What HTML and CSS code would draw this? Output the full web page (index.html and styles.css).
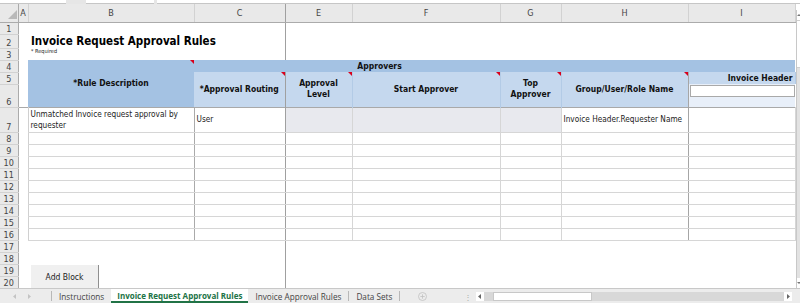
FILE: index.html
```html
<!DOCTYPE html>
<html lang="en">
  <head>
    <meta charset="UTF-8" />
    <title>Invoice Request Approval Rules</title>
    <link rel="stylesheet" href="styles.css">
  </head>
  <body>
    <div class="window">
      <div class="formula-strip">
        <div class="name-box"></div>
        <div class="fx-box"></div>
        <div class="formula-box"></div>
      </div>

      <div class="grid-area">
        <table class="sheet">
          <colgroup>
            <col class="c-rn" /><col class="c-a" /><col class="c-b" /><col class="c-c" />
            <col class="c-e" /><col class="c-f" /><col class="c-g" /><col class="c-h" /><col class="c-i" />
          </colgroup>
          <thead>
            <tr class="col-heads">
              <th class="corner">
                <svg width="9" height="9" viewBox="0 0 9 9"><path d="M9 0V9H0Z" fill="#b9b9b9" /></svg>
              </th>
              <th>A</th><th>B</th><th class="fz">C</th><th>E</th><th>F</th><th>G</th><th>H</th><th>I</th>
            </tr>
          </thead>
          <tbody>
            <tr class="h12"><th>1</th><td></td><td></td><td class="fz"></td><td></td><td></td><td></td><td></td><td></td></tr>
            <tr class="h14">
              <th>2</th><td></td>
              <td colspan="2" class="fz title-cell">Invoice Request Approval Rules</td>
              <td></td><td></td><td></td><td></td><td></td>
            </tr>
            <tr class="h12">
              <th>3</th><td></td>
              <td class="required">* Required</td><td class="fz"></td>
              <td></td><td></td><td></td><td></td><td></td>
            </tr>
            <tr class="h12">
              <th>4</th><td></td>
              <td rowspan="3" class="hd hd-main note">*Rule Description</td>
              <td colspan="4" class="hd band">Approvers</td>
              <td class="hd band"></td><td class="hd band"></td>
            </tr>
            <tr class="h12">
              <th>5</th><td></td>
              <td rowspan="2" class="hd sub note bl">*Approval Routing</td>
              <td rowspan="2" class="hd sub note">Approval<br>Level</td>
              <td rowspan="2" class="hd sub note">Start Approver</td>
              <td rowspan="2" class="hd sub note">Top<br>Approver</td>
              <td rowspan="2" class="hd sub note br">Group/User/Role Name</td>
              <td class="hd sub right">Invoice Header</td>
            </tr>
            <tr class="h23">
              <th>6</th><td></td>
              <td class="filter-cell"><div class="filter-box"></div></td>
            </tr>
            <tr class="h25 data">
              <th>7</th><td></td>
              <td class="cell">Unmatched Invoice request approval by requester</td>
              <td class="cell fz">User</td>
              <td class="cell grey"></td><td class="cell grey"></td><td class="cell grey"></td>
              <td class="cell br">Invoice Header.Requester Name</td>
              <td class="cell"></td>
            </tr>
            <tr class="h12 data"><th>8</th><td></td><td class="cell"></td><td class="cell fz"></td><td class="cell"></td><td class="cell"></td><td class="cell"></td><td class="cell br"></td><td class="cell"></td></tr>
            <tr class="h12 data"><th>9</th><td></td><td class="cell"></td><td class="cell fz"></td><td class="cell"></td><td class="cell"></td><td class="cell"></td><td class="cell br"></td><td class="cell"></td></tr>
            <tr class="h12 data"><th>10</th><td></td><td class="cell"></td><td class="cell fz"></td><td class="cell"></td><td class="cell"></td><td class="cell"></td><td class="cell br"></td><td class="cell"></td></tr>
            <tr class="h12 data"><th>11</th><td></td><td class="cell"></td><td class="cell fz"></td><td class="cell"></td><td class="cell"></td><td class="cell"></td><td class="cell br"></td><td class="cell"></td></tr>
            <tr class="h12 data"><th>12</th><td></td><td class="cell"></td><td class="cell fz"></td><td class="cell"></td><td class="cell"></td><td class="cell"></td><td class="cell br"></td><td class="cell"></td></tr>
            <tr class="h12 data"><th>13</th><td></td><td class="cell"></td><td class="cell fz"></td><td class="cell"></td><td class="cell"></td><td class="cell"></td><td class="cell br"></td><td class="cell"></td></tr>
            <tr class="h12 data"><th>14</th><td></td><td class="cell"></td><td class="cell fz"></td><td class="cell"></td><td class="cell"></td><td class="cell"></td><td class="cell br"></td><td class="cell"></td></tr>
            <tr class="h12 data"><th>15</th><td></td><td class="cell"></td><td class="cell fz"></td><td class="cell"></td><td class="cell"></td><td class="cell"></td><td class="cell br"></td><td class="cell"></td></tr>
            <tr class="h12 data"><th>16</th><td></td><td class="cell"></td><td class="cell fz"></td><td class="cell"></td><td class="cell"></td><td class="cell"></td><td class="cell br"></td><td class="cell"></td></tr>
            <tr class="h12"><th>17</th><td></td><td></td><td class="fz"></td><td></td><td></td><td></td><td></td><td></td></tr>
            <tr class="h12"><th>18</th><td></td><td></td><td class="fz"></td><td></td><td></td><td></td><td></td><td></td></tr>
            <tr class="h12"><th>19</th><td></td><td></td><td class="fz"></td><td></td><td></td><td></td><td></td><td></td></tr>
            <tr class="h12"><th>20</th><td></td><td></td><td class="fz"></td><td></td><td></td><td></td><td></td><td></td></tr>
          </tbody>
        </table>

        <div class="vscroll">
          <div class="arrow-box">
            <svg width="4" height="4" viewBox="0 0 4 4"><path d="M0 3L2 1L4 3Z" fill="#777" /></svg>
          </div>
          <div class="vthumb"></div>
          <div class="vtrack"></div>
          <div class="arrow-box">
            <svg width="4" height="4" viewBox="0 0 4 4"><path d="M0 1L2 3L4 1Z" fill="#777" /></svg>
          </div>
        </div>

        <button class="add-block">Add Block</button>
      </div>

      <div class="tabbar">
        <div class="tab-nav">
          <svg width="4" height="5" viewBox="0 0 4 5"><path d="M3 0V5L0 2.5Z" fill="#c4c4c4" /></svg>
          <svg width="4" height="5" viewBox="0 0 4 5"><path d="M1 0V5L4 2.5Z" fill="#c4c4c4" /></svg>
        </div>
        <div class="tab">Instructions</div>
        <div class="tab active">Invoice Request Approval Rules</div>
        <div class="tab">Invoice Approval Rules</div>
        <div class="tab sep">Data Sets</div>
        <div class="add-sheet">
          <svg width="9" height="9" viewBox="0 0 9 9">
            <circle cx="4.5" cy="4.5" r="4" fill="none" stroke="#c2c2c2" stroke-width="0.8" />
            <path d="M4.5 2.3V6.7M2.3 4.5H6.7" stroke="#c2c2c2" stroke-width="0.8" />
          </svg>
        </div>
        <div class="dots">⋮</div>
        <div class="hscroll">
          <div class="h-arrow">
            <svg width="4" height="5" viewBox="0 0 4 5"><path d="M3 0V5L0 2.5Z" fill="#666" /></svg>
          </div>
          <div class="h-gap"></div>
          <div class="h-thumb"></div>
          <div class="h-track"></div>
          <div class="h-arrow">
            <svg width="4" height="5" viewBox="0 0 4 5"><path d="M1 0V5L4 2.5Z" fill="#666" /></svg>
          </div>
        </div>
      </div>
    </div>
  </body>
</html>
```

FILE: styles.css
```css
body {
  margin: 0;
  background: #fff;
  font-family: "DejaVu Sans", sans-serif;
  font-stretch: condensed;
  color: #222;
}

.window {
  width: 800px;
  height: 303px;
  overflow: hidden;
  display: flex;
  flex-direction: column;
}

/* remains of the formula bar */
.formula-strip {
  height: 4px;
  display: flex;
  background: #e6e6e6;
}

.formula-strip div {
  background: #fff;
  border-bottom: 1px solid #c6c6c6;
  box-sizing: border-box;
}

.name-box {
  width: 66px;
  margin-right: 20px;
}

.fx-box {
  width: 68px;
  margin-right: 3px;
}

.formula-box {
  flex: 1;
}

.grid-area {
  position: relative;
  height: 284px;
  display: flex;
  overflow: hidden;
}

.sheet {
  width: 795px;
  table-layout: fixed;
  border-collapse: collapse;
  flex: none;
}

.c-rn { width: 18px; }
.c-a { width: 10px; }
.c-b { width: 166px; }
.c-c { width: 91px; }
.c-e { width: 67px; }
.c-f { width: 148px; }
.c-g { width: 61px; }
.c-h { width: 127px; }
.c-i { width: 107px; }

.sheet td,
.sheet th {
  padding: 0;
  overflow: hidden;
  white-space: nowrap;
}

.col-heads {
  height: 18px;
}

.col-heads th {
  background: #e9e9e9;
  border-right: 1px solid #d2d2d2;
  border-bottom: 1px solid #ababab;
  font-weight: normal;
  font-size: 9px;
  color: #444;
  text-align: center;
  vertical-align: middle;
}

.col-heads .corner {
  text-align: right;
  vertical-align: bottom;
  line-height: 0;
  padding: 0 1px 3px 0;
  border-right-color: #ababab;
}

tbody th {
  background: #e9e9e9;
  border-right: 1px solid #ababab;
  border-bottom: 1px solid #d2d2d2;
  font-weight: normal;
  font-size: 9px;
  line-height: 10px;
  color: #444;
  text-align: center;
  vertical-align: bottom;
}

.h12 { height: 12px; }
.h14 { height: 14px; }
.h23 { height: 23px; }
.h25 { height: 25px; }

.sheet .fz {
  border-right: 1px solid #a0a0a0;
}

.title-cell {
  font-size: 11.5px;
  font-weight: bold;
  color: #000;
  padding-left: 3px !important;
  vertical-align: bottom;
}

.required {
  font-size: 5.5px;
  padding-left: 3px !important;
  vertical-align: top;
  color: #222;
}

/* header block */
.hd {
  position: relative;
  font-weight: bold;
  font-size: 8.5px;
  color: #111;
  text-align: center;
  vertical-align: middle;
  line-height: 11px;
}

.hd-main {
  background: #a4c2e3;
}

.band {
  background: #a4c2e3;
  padding-left: 4px !important;
}

.sub {
  background: #c5d8ee;
  border-right: 1px solid #b3cbe6;
}

.sub.bl {
  border-right-color: #a0a0a0;
}

.sub.br {
  border-right-color: #a6a6a6;
}

.sub.right {
  text-align: right;
  padding-right: 2px;
}

.note::after {
  content: "";
  position: absolute;
  top: 0;
  right: 0;
  border-left: 4px solid transparent;
  border-top: 4px solid #d8001c;
}

.filter-cell {
  background: #e8eff9;
  vertical-align: top;
}

.filter-box {
  height: 10px;
  margin: 1px 0 0 1px;
  background: #fff;
  border: 1px solid #a9a9a9;
}

/* body cells */
.data .cell {
  border-right: 1px solid #d6d6d6;
  border-bottom: 1px solid #d6d6d6;
  font-size: 8.2px;
  color: #222;
  padding: 0 2px;
  vertical-align: middle;
  white-space: normal;
  line-height: 11px;
}

.data td:nth-child(3) {
  border-left: 1px solid #d0d0d0;
  border-right-color: #aaaaaa;
}

.data .cell.fz {
  border-right-color: #a0a0a0;
}

.data .cell.br {
  border-right-color: #a6a6a6;
}

.data .grey {
  background: #e8e9ee;
}

.h25.data {
  border-top: 1px solid #a9a9a9;
}

.vscroll {
  width: 5px;
  margin-top: 6px;
  display: flex;
  flex-direction: column;
  background: #e2e2e2;
  border-left: 1px solid #c8c8c8;
}

.arrow-box {
  height: 10px;
  background: #fff;
  display: flex;
  align-items: center;
  justify-content: center;
}

.vthumb {
  height: 46px;
  background: #fff;
  border-top: 1px solid #d0d0d0;
  border-bottom: 1px solid #d0d0d0;
}

.vtrack {
  flex: 1;
}

.add-block {
  position: absolute;
  left: 31px;
  top: 261px;
  width: 68px;
  height: 23px;
  border: none;
  border-right: 1px solid #8f8f8f;
  background: #f0f0f0;
  font-family: "DejaVu Sans", sans-serif;
  font-stretch: condensed;
  font-size: 8.5px;
  color: #222;
  padding: 0;
}

/* sheet tabs */
.tabbar {
  height: 15px;
  display: flex;
  align-items: stretch;
  background: #ececec;
  border-top: 1px solid #c8c8c8;
  box-sizing: border-box;
  font-family: "Open Sans", sans-serif;
  font-stretch: normal;
  font-size: 8.2px;
  color: #444;
}

.tab-nav {
  width: 52px;
  display: flex;
  align-items: center;
  gap: 10px;
  padding-left: 13px;
  box-sizing: border-box;
  border-right: 1px solid #b8b8b8;
  margin: 2px 0;
}

.tab {
  padding: 0 7px;
  display: flex;
  align-items: center;
  white-space: nowrap;
}

.tab.active {
  background: #fff;
  color: #217346;
  font-weight: bold;
  font-size: 8px;
  border-bottom: 2px solid #217346;
  padding: 1px 6px 0;
}

.tab.sep {
  border-left: 1px solid #b8b8b8;
  border-right: 1px solid #b8b8b8;
  margin: 2px 0;
}

.add-sheet {
  width: 44px;
  display: flex;
  align-items: center;
  justify-content: center;
}

.dots {
  width: 12px;
  color: #aaa;
  font-size: 8px;
  display: flex;
  align-items: center;
  justify-content: center;
  margin-left: 18px;
}

.hscroll {
  flex: 1;
  display: flex;
  align-items: center;
  padding: 0 8px 0 2px;
}

.h-arrow {
  width: 8px;
  height: 9px;
  background: #fff;
  display: flex;
  align-items: center;
  justify-content: center;
}

.h-gap {
  width: 9px;
  height: 9px;
  background: #d8d8d8;
}

.h-thumb {
  width: 99px;
  height: 9px;
  background: #fff;
  border: 1px solid #c8c8c8;
  box-sizing: border-box;
}

.h-track {
  flex: 1;
  height: 9px;
  background: #d8d8d8;
}
```
